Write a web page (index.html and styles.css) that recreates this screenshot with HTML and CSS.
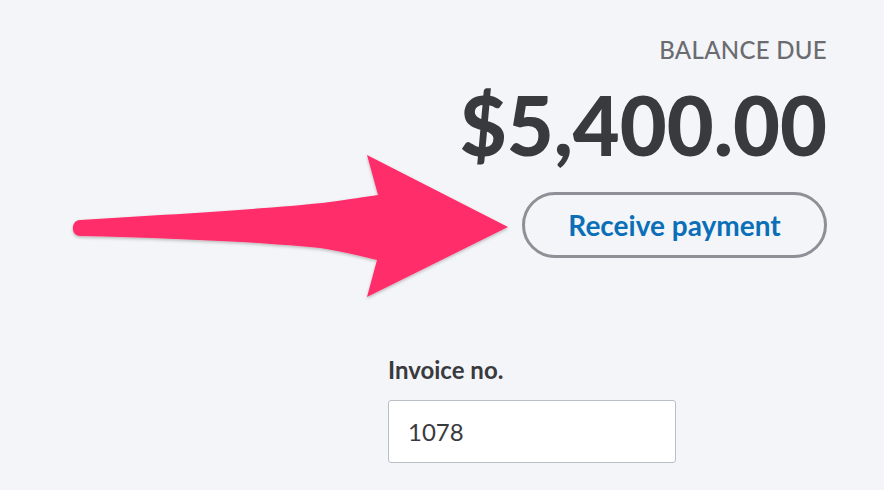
FILE: index.html
```html
<!DOCTYPE html>
<html>
<head>
<meta charset="utf-8">
<link rel="stylesheet" href="styles.css">
</head>
<body>
<div class="page">
  <section class="balance">
    <div class="balance-label">BALANCE DUE</div>
    <div class="balance-amount">$5,400.00</div>
    <button class="receive-btn">Receive payment</button>
  </section>
  <section class="invoice">
    <label class="invoice-label">Invoice no.</label>
    <div class="invoice-input">1078</div>
  </section>
  <svg class="arrow" width="884" height="490" viewBox="0 0 884 490">
    <defs>
      <filter id="sh" x="-10%" y="-10%" width="120%" height="130%">
        <feDropShadow dx="0" dy="1.5" stdDeviation="1.5" flood-color="#000" flood-opacity="0.25"/>
      </filter>
    </defs>
    <path filter="url(#sh)" fill="#ff2d6a" d="M80,220 C180,214 280,208 330,202 C350,199 365,197 378,195 L367,155 L508,227 L367,297 L377,260 C360,256 345,252 320,248 C260,242 170,238 80,236 C70,236 71,220 80,220 Z"/>
  </svg>
</div>
</body>
</html>
```
FILE: styles.css
```css
* { box-sizing: border-box; }
html, body { margin: 0; padding: 0; }
body {
  background: #f4f5f8;
  font-family: Lato, "Open Sans", sans-serif;
  color: #393a3d;
}
.page {
  position: relative;
  width: 884px;
  height: 490px;
  overflow: hidden;
}
.balance {
  display: flex;
  flex-direction: column;
  align-items: flex-end;
  padding: 36px 57px 0 0;
}
.balance-label {
  font-size: 24px;
  line-height: 28px;
  font-weight: 500;
  color: #6b6c72;
  letter-spacing: 0.3px;
}
.balance-amount {
  font-size: 81px;
  line-height: 90px;
  font-weight: 900;
  color: #393a3d;
  margin-top: 16px;
}
.receive-btn {
  margin-top: 22px;
  width: 305px;
  height: 66px;
  border: 3px solid #8d9096;
  border-radius: 33px;
  background: #f4f5f8;
  color: #0b6fb8;
  font-family: Lato, "Open Sans", sans-serif;
  font-size: 28px;
  font-weight: 700;
  padding: 0;
}
.invoice {
  display: flex;
  flex-direction: column;
  padding: 98px 0 0 388px;
}
.invoice-label {
  font-size: 24px;
  font-weight: 700;
  line-height: 28px;
  color: #393a3d;
}
.invoice-input {
  margin-top: 16px;
  width: 288px;
  height: 63px;
  background: #fff;
  border: 1px solid #babec5;
  border-radius: 3px;
  padding: 0 19px;
  display: flex;
  align-items: center;
  font-size: 24px;
  color: #393a3d;
}
.arrow {
  position: absolute;
  left: 0;
  top: 0;
  pointer-events: none;
}
```
